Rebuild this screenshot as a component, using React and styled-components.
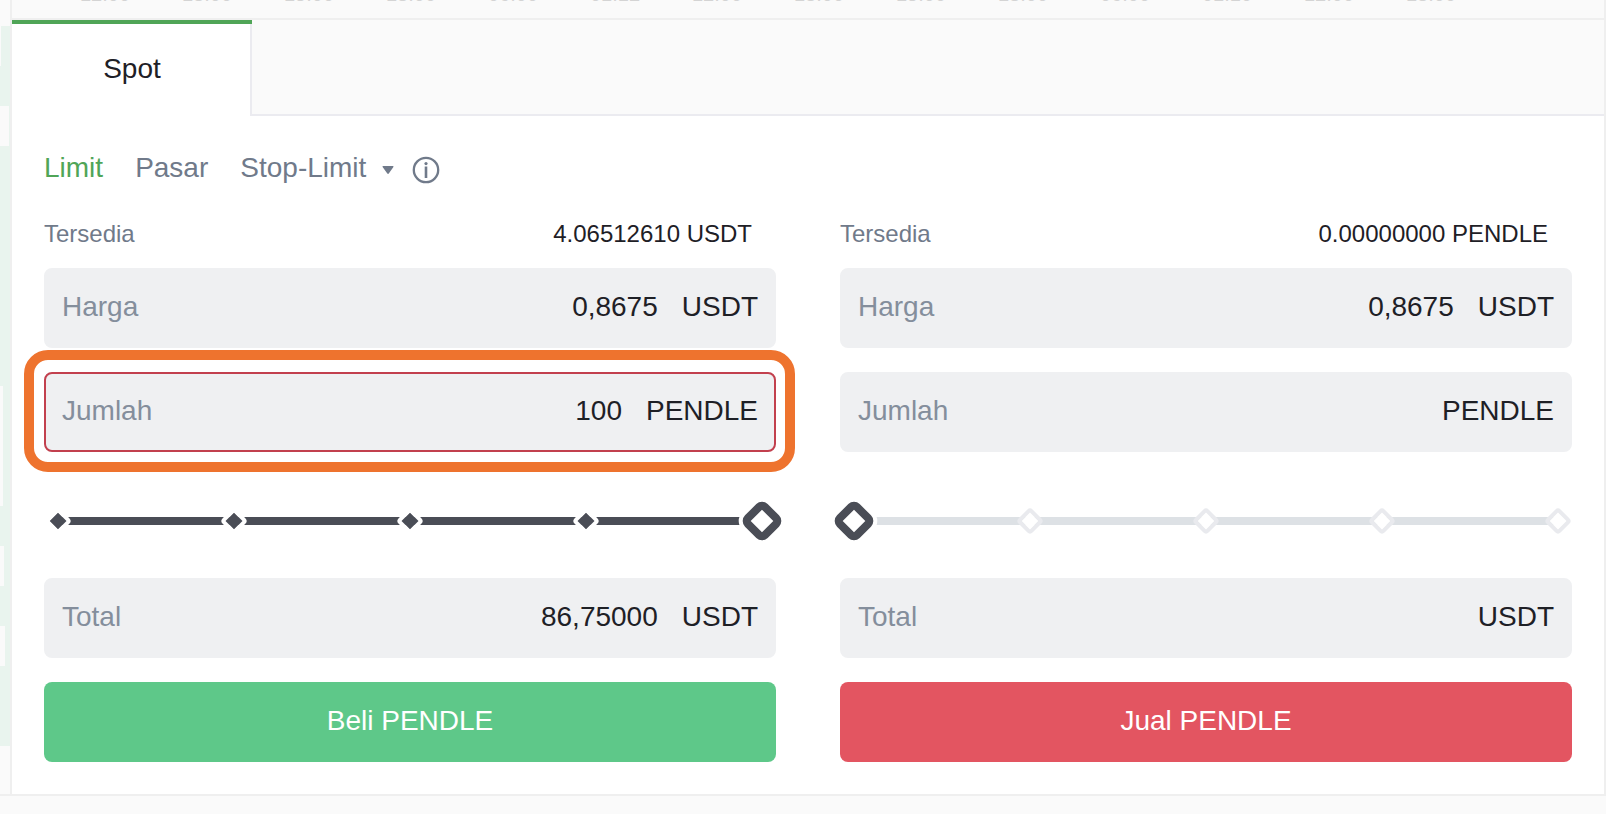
import React, { useState } from 'react';
import styled, { createGlobalStyle } from 'styled-components';

const GlobalStyle = createGlobalStyle`
  * {
    box-sizing: border-box;
  }
  body {
    margin: 0;
    background-color: #fafafa;
    color: #1e2026;
    font-family: 'Liberation Sans', Arial, sans-serif;
    font-size: 28px;
    overflow: hidden;
  }
  button,
  input {
    font: inherit;
  }
`;

const Page = styled.div`
  display: flex;
  border-bottom: 2px solid #efefef;
`;

const OrderBook = styled.aside`
  flex: 0 0 10px;
  padding-top: 26px;
  overflow: hidden;
`;

const DepthRow = styled.div`
  height: 40px;
  background-color: #e9f4ee;
`;

const DepthGap = styled.div`
  height: 100%;
  background-color: #fafafa;
`;

const Main = styled.main`
  flex: 1;
  min-width: 0;
  border-left: 2px solid #efefef;
  border-right: 2px solid #efefef;
`;

const ChartFooter = styled.div`
  height: 20px;
  border-bottom: 2px solid #efefef;
  overflow: hidden;
`;

const TimeAxis = styled.div`
  display: flex;
  margin-top: -16px;
  padding-left: 42px;
  color: #d4d4d4;
  font-size: 20px;
  line-height: 20px;
`;

const Tick = styled.span`
  flex: 0 0 102px;
  text-align: center;
`;

const MarketTabs = styled.div`
  display: flex;
  height: 96px;
`;

const MarketTab = styled.button`
  width: 240px;
  padding: 0 0 2px;
  border: 0;
  border-top: 4px solid #50a557;
  background-color: #ffffff;
  box-shadow: inset -2px 0 0 #ebebf0;
  color: #1e2026;
`;

const TabsRest = styled.div`
  flex: 1;
  border-bottom: 2px solid #ebebf0;
`;

const Panel = styled.section`
  padding: 32px;
  background-color: #ffffff;
`;

const OrderTypes = styled.div`
  display: flex;
  gap: 32px;
  height: 40px;
`;

const OrderType = styled.button`
  display: flex;
  align-items: center;
  gap: 16px;
  padding: 0;
  border: 0;
  background: none;
  color: ${(props) => (props.$active ? '#50a557' : '#707a8a')};
  line-height: 40px;
  white-space: nowrap;
  cursor: pointer;
  svg {
    margin-top: 4px;
  }
`;

const StopGroup = styled.div`
  display: flex;
  gap: 18px;
`;

const Forms = styled.div`
  display: grid;
  grid-template-columns: 1fr 1fr;
  gap: 64px;
  margin-top: 28px;
`;

const Form = styled.form`
  display: flex;
  flex-direction: column;
  min-width: 0;
`;

const Balance = styled.div`
  display: flex;
  justify-content: space-between;
  margin-bottom: 16px;
  padding-right: 24px;
  font-size: 24px;
  line-height: 36px;
`;

const Muted = styled.span`
  color: #707a8a;
`;

const Fields = styled.div`
  display: flex;
  flex-direction: column;
  gap: 24px;
`;

const FieldBox = styled.div`
  position: relative;
  display: flex;
  align-items: center;
  height: 80px;
  padding: 0 16px 2px;
  border: 2px solid ${(props) => (props.$error ? '#c2404e' : '#eff0f2')};
  border-radius: 8px;
  background-color: #eff0f2;
`;

const FieldLabel = styled.label`
  color: #848e9c;
`;

const FieldInput = styled.input`
  flex: 1;
  min-width: 0;
  padding: 0;
  border: 0;
  background: none;
  color: #1e2026;
  text-align: right;
  outline: none;
`;

const Unit = styled.span`
  margin-left: 24px;
`;

const Highlight = styled.div`
  position: absolute;
  inset: -24px -21px -22px -22px;
  border: 10px solid #ee732e;
  border-radius: 24px;
  pointer-events: none;
`;

const SliderBox = styled.div`
  position: relative;
  display: flex;
  align-items: center;
  height: 42px;
  margin: 48px 0 36px;
  padding: 0 14px;
`;

const Track = styled.div`
  position: relative;
  display: flex;
  flex: 1;
  align-items: center;
  justify-content: space-between;
  height: 8px;
  background-color: #dde1e5;
`;

const TrackFill = styled.div`
  position: absolute;
  inset: 0 auto 0 0;
  background-color: #4a4d56;
`;

const Stop = styled.span`
  position: relative;
  width: 20px;
  height: 20px;
  margin: 0 -10px;
  border: 4px solid ${(props) => (props.$reached ? '#ffffff' : '#e9eaee')};
  border-radius: 4px;
  background-color: ${(props) => (props.$reached ? '#4a4d56' : '#ffffff')};
  background-clip: padding-box;
  transform: rotate(45deg);
`;

// sits over the track, wider by half a thumb on each side
const Range = styled.input`
  position: absolute;
  inset: 0 -2px;
  width: calc(100% + 4px);
  margin: 0;
  background: none;
  appearance: none;
  outline: none;
  cursor: pointer;
  &::-webkit-slider-thumb {
    width: 32px;
    height: 32px;
    border: 8px solid #4a4d56;
    border-radius: 8px;
    background-color: #ffffff;
    box-shadow: 0 0 0 4px #ffffff;
    appearance: none;
    transform: rotate(45deg);
  }
`;

const SubmitButton = styled.button`
  height: 80px;
  margin-top: 24px;
  padding: 0 0 2px;
  border: 0;
  border-radius: 8px;
  background-color: ${(props) => (props.$side === 'buy' ? '#5ec889' : '#e35561')};
  color: #ffffff;
  cursor: pointer;
`;

// width in px left uncovered by the depth bar of each row
const depthGaps = [1, 0, 9, 0, 0, 0, 0, 0, 0, 3, 3, 3, 0, 4, 0, 5, 0, 0];

const ticks = [
  '12:00', '13:00', '15:00', '18:00', '06:00', '01:12', '12:00',
  '13:00', '15:00', '18:00', '06:00', '01:10', '12:00', '13:00',
];

const stops = [0, 25, 50, 75, 100];

const CaretIcon = () => (
  <svg width="12" height="10" viewBox="0 0 12 10" aria-hidden="true">
    <path d="M1 1h10a.6.6 0 0 1 .4 1L6.8 8.6a1 1 0 0 1-1.5 0L.6 2A.6.6 0 0 1 1 1z" fill="currentColor" />
  </svg>
);

const InfoIcon = () => (
  <svg width="28" height="28" viewBox="0 0 28 28" fill="none" aria-hidden="true">
    <circle cx="14" cy="14" r="12.2" stroke="currentColor" strokeWidth="2.3" />
    <path d="M14 10.5v11.5" stroke="currentColor" strokeWidth="2.6" />
    <circle cx="14" cy="7.6" r="1.6" fill="currentColor" />
  </svg>
);

const Field = ({ id, label, unit, value, onChange, error, highlight }) => (
  <FieldBox $error={error}>
    <FieldLabel htmlFor={id}>{label}</FieldLabel>
    <FieldInput id={id} type="text" inputMode="decimal" value={value} onChange={onChange} />
    <Unit>{unit}</Unit>
    {highlight && <Highlight />}
  </FieldBox>
);

const OrderForm = ({ side, available, submitLabel, initial, error }) => {

  const [ order, setOrder ] = useState(initial);

  const handleChange = (name) => (e) => {
    const { value } = e.target;
    setOrder((prev) => ({ ...prev, [name]: value }));
  }

  const handleSubmit = (e) => {
    e.preventDefault();
  }

  return (
    <Form onSubmit={handleSubmit}>
      <Balance>
        <Muted>Tersedia</Muted>
        <span>{available}</span>
      </Balance>
      <Fields>
        <Field
          id={`${side}-price`}
          label="Harga"
          unit="USDT"
          value={order.price}
          onChange={handleChange('price')}
        />
        <Field
          id={`${side}-amount`}
          label="Jumlah"
          unit="PENDLE"
          value={order.amount}
          onChange={handleChange('amount')}
          error={error}
          highlight={error}
        />
      </Fields>
      <SliderBox>
        <Track>
          <TrackFill style={{ width: `${order.percent}%` }} />
          {stops.map((stop) => (
            <Stop key={stop} $reached={order.percent > 0 && stop <= order.percent} />
          ))}
        </Track>
        <Range
          type="range"
          min="0"
          max="100"
          aria-label={`${submitLabel} %`}
          value={order.percent}
          onChange={(e) => setOrder((prev) => ({ ...prev, percent: Number(e.target.value) }))}
        />
      </SliderBox>
      <Field
        id={`${side}-total`}
        label="Total"
        unit="USDT"
        value={order.total}
        onChange={handleChange('total')}
      />
      <SubmitButton type="submit" $side={side}>{submitLabel}</SubmitButton>
    </Form>
  );
};

const App = () => {

  const [ orderType, setOrderType ] = useState('limit');

  return (
    <>
      <GlobalStyle />
      <Page>
        <OrderBook>
          {depthGaps.map((gap, i) => (
            <DepthRow key={i}>
              <DepthGap style={{ width: gap }} />
            </DepthRow>
          ))}
        </OrderBook>
        <Main>
          <ChartFooter>
            <TimeAxis>
              {ticks.map((tick, i) => (
                <Tick key={i}>{tick}</Tick>
              ))}
            </TimeAxis>
          </ChartFooter>
          <MarketTabs>
            <MarketTab type="button">Spot</MarketTab>
            <TabsRest />
          </MarketTabs>
          <Panel>
            <OrderTypes>
              <OrderType type="button" $active={orderType === 'limit'} onClick={() => setOrderType('limit')}>
                Limit
              </OrderType>
              <OrderType type="button" $active={orderType === 'market'} onClick={() => setOrderType('market')}>
                Pasar
              </OrderType>
              <StopGroup>
                <OrderType type="button" $active={orderType === 'stop'} onClick={() => setOrderType('stop')}>
                  Stop-Limit
                  <CaretIcon />
                </OrderType>
                <OrderType type="button" aria-label="Info">
                  <InfoIcon />
                </OrderType>
              </StopGroup>
            </OrderTypes>
            <Forms>
              <OrderForm
                side="buy"
                available="4.06512610 USDT"
                submitLabel="Beli PENDLE"
                initial={{ price: '0,8675', amount: '100', total: '86,75000', percent: 100 }}
                error
              />
              <OrderForm
                side="sell"
                available="0.00000000 PENDLE"
                submitLabel="Jual PENDLE"
                initial={{ price: '0,8675', amount: '', total: '', percent: 0 }}
              />
            </Forms>
          </Panel>
        </Main>
      </Page>
    </>
  );
};

export default App;
